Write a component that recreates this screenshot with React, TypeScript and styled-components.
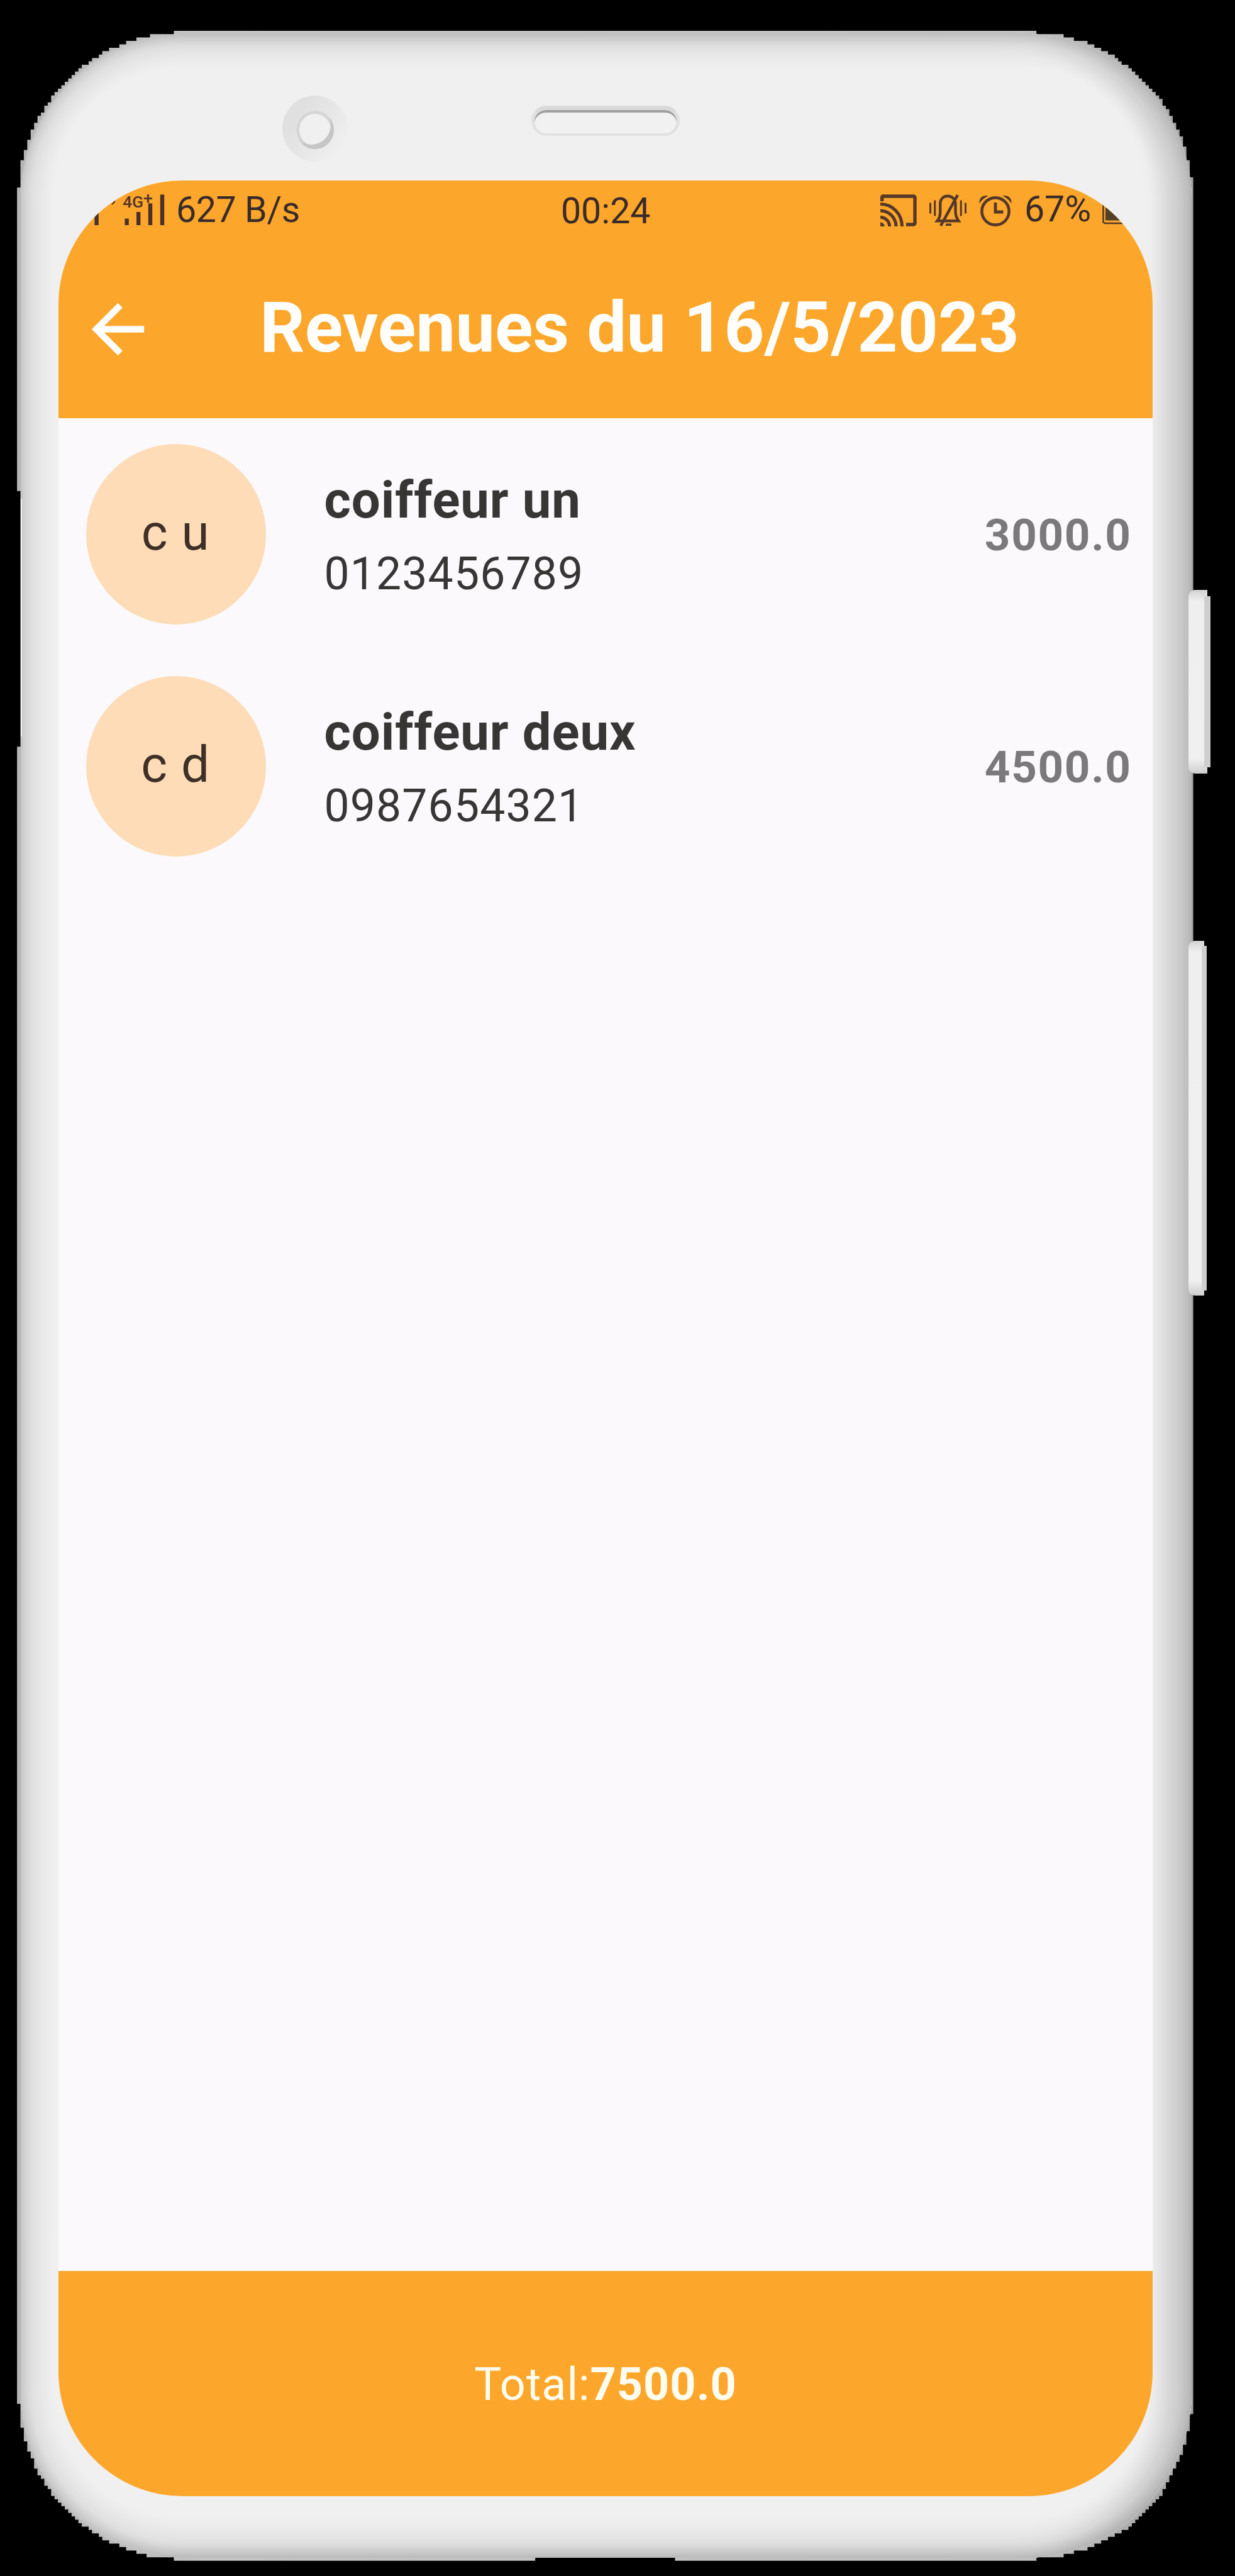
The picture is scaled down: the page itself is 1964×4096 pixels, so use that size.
import React from 'react';
import styled, { createGlobalStyle } from 'styled-components';

const GlobalStyle = createGlobalStyle`
  *, *::before, *::after { box-sizing: border-box; }
  html, body { margin: 0; padding: 0; background: #000; }
  body { font-family: Roboto, "Liberation Sans", sans-serif; }
`;

/* ---------- device outline: a stepped silhouette on a coarse grid ---------- */

const CELL = 1964 / 2898 * 8;
const LEFT = 5;
const TOP = 9;
const RIGHT = 350;
const BOTTOM = 751;

type Pt = [number, number];

// Each list holds the cell where the edge changes, from one side to the next.
const topLeft: Pt[] = [
  [5, 55], [6, 47], [7, 44], [8, 41], [9, 38], [10, 36], [11, 34], [12, 33], [13, 31], [14, 30],
  [15, 28], [16, 27], [17, 26], [18, 25], [19, 24], [20, 23], [21, 22], [22, 21], [23, 20],
  [24, 19], [26, 18], [27, 17], [29, 16], [30, 15], [32, 14], [35, 13], [37, 12], [40, 11],
  [44, 10], [51, 9],
];
const topRight: Pt[] = [
  [304, 10], [312, 11], [315, 12], [319, 13], [321, 14], [323, 15], [325, 16], [327, 17],
  [328, 18], [329, 19], [331, 20], [332, 21], [333, 22], [334, 23], [335, 24], [336, 25],
  [337, 26], [338, 27], [339, 28], [340, 29], [341, 31], [342, 32], [343, 34], [344, 36],
  [345, 38], [346, 40], [347, 43], [348, 47], [349, 52],
];
const bottomRight: Pt[] = [
  [350, 708], [349, 713], [348, 717], [347, 720], [346, 722], [345, 724], [344, 726], [343, 728],
  [342, 730], [341, 732], [340, 733], [339, 734], [338, 735], [337, 736], [336, 737], [335, 738],
  [334, 739], [333, 740], [332, 741], [331, 742], [329, 743], [327, 744], [325, 745], [323, 746],
  [321, 747], [319, 748], [315, 749], [312, 750], [304, 751],
];
const bottomLeft: Pt[] = [
  [51, 750], [43, 749], [40, 748], [37, 747], [35, 746], [32, 745], [30, 744], [29, 743],
  [27, 742], [26, 741], [24, 740], [23, 739], [22, 738], [21, 737], [20, 736], [19, 735],
  [18, 734], [17, 733], [16, 732], [15, 730], [14, 729], [13, 727], [12, 726], [11, 724],
  [10, 721], [9, 719], [8, 716], [7, 712], [6, 705],
];

const buildOutline = () => {
  const pts: Pt[] = [];
  topLeft.forEach(([x, y], i) => {
    pts.push([x, y]);
    const next = topLeft[i + 1];
    if (next) pts.push([next[0], y]);
  });
  topRight.forEach(([x, y], i) => {
    pts.push([x, i === 0 ? TOP : topRight[i - 1][1]]);
    pts.push([x, y]);
  });
  pts.push([RIGHT, 52]);
  bottomRight.forEach(([x, y], i) => {
    if (i > 0) pts.push([x, bottomRight[i - 1][1]]);
    pts.push([x, y]);
  });
  pts.push([198, 751], [198, 750], [157, 750], [157, 751]);
  bottomLeft.forEach(([x, y], i) => {
    pts.push([x, i === 0 ? BOTTOM : bottomLeft[i - 1][1]]);
    pts.push([x, y]);
  });
  pts.push([5, 705], [5, 219], [6, 219], [6, 144], [5, 144]);
  return pts
    .map(([x, y]) => `${((x - LEFT) * CELL).toFixed(2)}px ${((y - TOP) * CELL).toFixed(2)}px`)
    .join(', ');
};

/* ---------- bevel: concentric bands, dark at the rim, light inside ---------- */

const stops: Pt[] = [[0, 198], [0.12, 210], [0.35, 224], [0.65, 232], [1, 240]];
const shade = (t: number) => {
  for (let i = 1; i < stops.length; i++) {
    if (t <= stops[i][0]) {
      const [a, va] = stops[i - 1];
      const [b, vb] = stops[i];
      return Math.round(va + ((vb - va) * (t - a)) / (b - a));
    }
  }
  return 240;
};

const buildBevel = () => {
  const l = 52, r = 66, t = 58, b = 68, n = 34;
  const list: string[] = ['inset -44px 0 34px rgba(0,0,0,0.09)', 'inset 0 -12px 18px rgba(0,0,0,0.03)'];
  for (let i = 1; i <= n; i++) {
    const k = i / n;
    const s = ((l + r) / 2) * k;
    const dx = ((l - r) / 2) * k;
    const dy = ((t - b) / 2) * k;
    const v = shade(k);
    list.push(`inset ${dx.toFixed(2)}px ${dy.toFixed(2)}px 0 ${s.toFixed(2)}px rgb(${v},${v},${v})`);
  }
  return list.join(', ');
};

const Page = styled.main`
  width: 1964px;
  height: 4096px;
  padding: ${TOP * CELL}px 0 0 ${LEFT * CELL}px;
  background: #000;
  overflow: hidden;
`;

const Device = styled.div`
  position: relative;
  width: ${(RIGHT - LEFT) * CELL}px;
  height: ${(BOTTOM - TOP) * CELL}px;
`;

const Shell = styled.div`
  height: 100%;
  padding: 5px 3px 5px 6px;
  background: linear-gradient(90deg, #b5b5b5 0, #c3c3c3 300px, #c0c0c0 1600px, #a3a3a3 100%);
  clip-path: polygon(${buildOutline()});
`;

const Body = styled.div`
  display: flex;
  flex-direction: column;
  height: 100%;
  padding: 0 61.3px 98px 59.8px;
  border-radius: 266px;
  background: #f0f0f0;
  box-shadow: ${buildBevel()};
`;

const Bezel = styled.div`
  display: flex;
  align-items: flex-start;
  flex: none;
  height: 233.6px;
  padding: 98.5px 0 0 355.8px;
`;

const Camera = styled.div`
  display: flex;
  align-items: center;
  justify-content: center;
  width: 104px;
  height: 105px;
  border-radius: 50%;
  background: linear-gradient(125deg, #e0e0e0 25%, #e6e6e6 50%, #efefef 85%);
`;

const Lens = styled.div`
  width: 60px;
  height: 61px;
  margin-top: 4px;
  border-radius: 50%;
  background: #f0f0f0;
  box-shadow: inset -6px -8px 0 -1px #c6c6c6, inset 0 0 0 5px #d6d6d6;
`;

const Speaker = styled.div`
  width: 236px;
  height: 48px;
  margin: 15.5px 0 0 292px;
  border: solid #e1e1e1;
  border-width: 7px 5px 4px;
  border-top-color: #dadada;
  border-radius: 24px;
  background: #f1f1f1;
  box-shadow: inset 0 4px 0 #a0a0a0;
`;

const SideButton = styled.div<{ $top: number; $height: number; $width: number; $lip: number }>`
  position: absolute;
  left: ${1890 - LEFT * CELL}px;
  top: ${(p) => p.$top - TOP * CELL}px;
  width: ${(p) => p.$width}px;
  height: ${(p) => p.$height}px;
  border-radius: 10px 0 0 10px;
  background: linear-gradient(180deg, #d2d2d2 0, #efefef 18px, #f0f0f0 calc(100% - 24px), #cecece 100%);
  &::after {
    content: '';
    position: absolute;
    right: ${(p) => -p.$lip / 2}px;
    top: ${(p) => p.$lip}px;
    bottom: ${(p) => p.$lip}px;
    width: ${(p) => p.$lip}px;
    background: #cfcfcf;
  }
`;

const RimLight = styled.div`
  position: absolute;
  left: 6px;
  top: 744px;
  width: 2px;
  height: 378px;
  background: #f2f2f2;
`;

/* ---------- app ---------- */

const Screen = styled.div`
  display: flex;
  flex-direction: column;
  flex: none;
  width: 1740.3px;
  height: 3682px;
  border-radius: 197px;
  overflow: hidden;
  background: #fbf9fc;
`;

const StatusBar = styled.div`
  display: flex;
  align-items: flex-start;
  flex: none;
  height: 94px;
  padding-top: 13px;
  background: #fca72b;
  color: #3a2b2b;
`;

const StatusText = styled.span<{ $ml: number; $mt?: number; $w?: number }>`
  flex: none;
  width: ${(p) => (p.$w ? p.$w + 'px' : 'auto')};
  margin: ${(p) => p.$mt ?? 0}px 0 0 ${(p) => p.$ml}px;
  font-size: 57.3px;
  line-height: 68px;
  white-space: nowrap;
`;

const Rate = styled(StatusText)`
  letter-spacing: -0.4px;
`;

const StatusIcon = styled.svg<{ $ml: number }>`
  flex: none;
  display: block;
  margin: 8.5px 0 0 ${(p) => p.$ml}px;
  overflow: visible;
`;

const Signal = styled.div`
  flex: none;
  position: relative;
  width: 114px;
  height: 52px;
  margin: 8px 0 0 55px;
`;

const NetworkLabel = styled.span`
  position: absolute;
  left: 47px;
  top: 1px;
  display: flex;
  font-size: 26.5px;
  font-weight: 500;
  line-height: 24px;
  color: #55342b;
`;

const Plus = styled.span`
  margin-top: -6px;
`;

const AppBar = styled.header`
  display: flex;
  align-items: center;
  flex: none;
  height: 284px;
  padding-left: 32px;
  background: #fca72b;
`;

const Title = styled.h1`
  margin: 0 0 5px 163px;
  font-size: 112.2px;
  line-height: 134px;
  font-weight: 700;
  color: #fffefb;
  white-space: nowrap;
`;

const List = styled.ul`
  flex: 1;
  margin: 0;
  padding: 0;
  list-style: none;
`;

const Row = styled.li`
  display: flex;
  align-items: center;
  height: 368.8px;
  padding: 0 33.5px 0 44px;
`;

const Avatar = styled.div`
  display: flex;
  align-items: center;
  justify-content: center;
  flex: none;
  width: 286.6px;
  height: 286.6px;
  padding: 0 2px 6px 0;
  border-radius: 50%;
  background: #fddcb7;
  color: #3f3027;
  font-size: 80px;
  letter-spacing: 1px;
`;

const Person = styled.div`
  flex: 1;
  margin-left: 92px;
  padding-top: 6px;
  color: #383635;
`;

const Name = styled.div`
  font-size: 81.5px;
  line-height: 120px;
  font-weight: 700;
  letter-spacing: 0.9px;
`;

const Phone = styled.div`
  font-size: 71.5px;
  line-height: 115px;
  letter-spacing: 1.1px;
`;

const Amount = styled.div`
  padding-top: 2px;
  font-size: 71px;
  font-weight: 700;
  letter-spacing: 1.6px;
  color: #7c797c;
`;

const Footer = styled.footer`
  display: flex;
  align-items: center;
  justify-content: center;
  flex: none;
  height: 358px;
  padding-top: 3px;
  background: #fca72b;
  color: #fffdf0;
  font-size: 72px;
  letter-spacing: 1px;
`;

const stylists = [
  { initials: 'c u', name: 'coiffeur un', phone: '0123456789', amount: '3000.0' },
  { initials: 'c d', name: 'coiffeur deux', phone: '0987654321', amount: '4500.0' },
];

const ink = '#55382a';

const SignalIcon = () => (
  <Signal>
    <svg width="114" height="52" viewBox="0 0 114 52" fill="#4a3029">
      <rect x="2.4" y="14" width="6.4" height="36" />
      <path d="M29 17 35 10.500v3l-4 4z" />
      <rect x="50.4" y="39.6" width="6.4" height="10.4" />
      <rect x="69" y="29" width="6.4" height="21" />
      <rect x="87.8" y="15.4" width="6.4" height="34.6" />
      <rect x="106.8" y="1.4" width="6.4" height="48.6" />
    </svg>
    <NetworkLabel>
      <span>4G</span>
      <Plus>+</Plus>
    </NetworkLabel>
  </Signal>
);

const CastIcon = () => (
  <StatusIcon $ml={366} width="58" height="51" viewBox="0 0 58 51" fill="none" stroke={ink} strokeWidth="5.4">
    <path d="M2.7 11V4.5a1.5 1.5 0 0 1 1.5-1.5H53a2 2 0 0 1 2 2V46a2 2 0 0 1-2 2H41" />
    <path d="M0 15.6c19 0 34.5 15 34.5 35.4M0 26c13.5 0 25 11 25 25M0 36.4c8 0 14.6 6.5 14.6 14.6" strokeWidth="5" />
    <path d="M0 44.5c4 0 6.6 3 6.6 6.5H0z" fill={ink} stroke="none" />
  </StatusIcon>
);

const BellOffIcon = () => (
  <StatusIcon $ml={20} width="59" height="51" viewBox="0 0 59 51" fill="none" stroke={ink} strokeWidth="4.4">
    <path d="M12.5 42.3c3.5-4 4.7-8 4.7-14V15.5C17.2 7.5 22 2.8 29 2.8s12.5 4.7 12.5 12.7V28c0 6 2 10 5 14.300z" />
    <path d="M18 50 45 1" strokeWidth="4.6" />
    <path d="M26 48.300h9" strokeWidth="3.4" />
    <path d="M1.500 13.500v17M8.700 9.500v25M50.200 9.500v25M57.500 13.500v17" strokeWidth="3" />
  </StatusIcon>
);

const AlarmIcon = () => (
  <StatusIcon $ml={20} width="52" height="51" viewBox="0 0 52 51" fill="none" stroke={ink} strokeWidth="4.600">
    <circle cx="26" cy="27" r="21.600" />
    <path d="M26 13v15h12.500" strokeWidth="4.800" />
    <path d="M.5 14.500C-.5 6 6 .5 14.500 2.500 9 5 4 9.500.5 14.500zM51.500 14.500C52.500 6 46 .5 37.500 2.500 43 5 48 9.500 51.500 14.500z" fill={ink} stroke="none" />
  </StatusIcon>
);

const BatteryIcon = () => (
  <StatusIcon $ml={18} width="60" height="48" viewBox="0 0 60 48">
    <rect x="1.500" y="6" width="57" height="40" rx="3" fill="none" stroke={ink} strokeWidth="2.600" />
    <rect x="5" y="9" width="50" height="32.500" fill="#54402a" />
  </StatusIcon>
);

const BackIcon = () => (
  <svg width="125" height="125" viewBox="0 0 24 24" fill="#fffefb">
    <path d="M20 11H7.830l5.590-5.590L12 4l-8 8 8 8 1.410-1.410L7.830 13H20v-2z" />
  </svg>
);

export default function App() {
  return (
    <>
      <GlobalStyle />
      <Page>
        <Device>
          <Shell>
            <Body>
              <Bezel>
                <Camera>
                  <Lens />
                </Camera>
                <Speaker />
              </Bezel>
              <Screen>
                <StatusBar>
                  <SignalIcon />
                  <Rate $ml={18} $w={201}>627 B/s</Rate>
                  <StatusText $ml={411} $mt={2} $w={142}>00:24</StatusText>
                  <CastIcon />
                  <BellOffIcon />
                  <AlarmIcon />
                  <StatusText $ml={20} $mt={-1} $w={106}>67%</StatusText>
                  <BatteryIcon />
                </StatusBar>
                <AppBar>
                  <BackIcon />
                  <Title>Revenues du 16/5/2023</Title>
                </AppBar>
                <List>
                  {stylists.map((s) => (
                    <Row key={s.phone}>
                      <Avatar>{s.initials}</Avatar>
                      <Person>
                        <Name>{s.name}</Name>
                        <Phone>{s.phone}</Phone>
                      </Person>
                      <Amount>{s.amount}</Amount>
                    </Row>
                  ))}
                </List>
                <Footer>
                  <span>Total:</span>
                  <strong>7500.0</strong>
                </Footer>
              </Screen>
            </Body>
          </Shell>
          <RimLight />
          <SideButton $top={938} $height={292} $width={30} $lip={10} />
          <SideButton $top={1496.5} $height={564} $width={25} $lip={8} />
        </Device>
      </Page>
    </>
  );
}
